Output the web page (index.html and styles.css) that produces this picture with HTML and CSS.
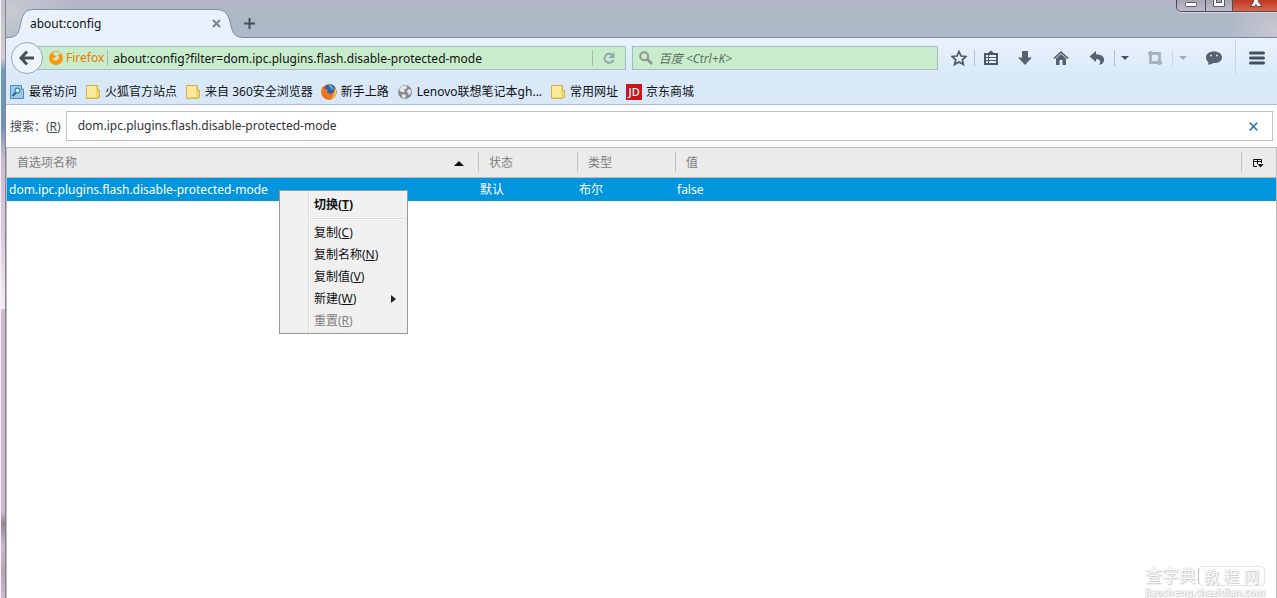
FILE: index.html
```html
<!DOCTYPE html>
<html lang="zh-CN">
<head>
<meta charset="utf-8">
<title>about:config</title>
<link rel="stylesheet" href="styles.css">
</head>
<body>
<div class="frame"></div>
<div class="window">
  <header class="titlebar">
    <div class="tab">
      <svg class="tab-shape" width="238" height="30" viewBox="0 0 238 30"><path d="M0 30V28.500H3C14 28 13 20 15 13C17 4 20 .5 28 .5H210C219 .5 222 5 224 13C226 22 227 28.500 238 28.500V30Z" fill="#e9f2fc"/><path d="M0 28.500H3C14 28 13 20 15 13C17 4 20 .5 28 .5H210C219 .5 222 5 224 13C226 22 227 28.500 238 28.500" fill="none" stroke="#8290a3"/></svg>
      <span class="tab-title">about:config</span>
      <button class="plain tab-close" aria-label="关闭标签页"><svg width="9" height="9" viewBox="0 0 9 9"><path d="M1 1L8 8M8 1L1 8" stroke="#7d8894" stroke-width="2.300"/></svg></button>
    </div>
    <button class="plain new-tab" aria-label="新建标签页"><svg width="11" height="11" viewBox="0 0 11 11"><path d="M5.500 0V11M0 5.500H11" stroke="#46505c" stroke-width="2"/></svg></button>
    <div class="controls">
      <button class="plain control" aria-label="最小化"><svg width="28" height="11"><rect x="8.500" y="2.500" width="11" height="4" rx="1" fill="#fff" stroke="#555a69"/></svg></button>
      <button class="plain control" aria-label="最大化"><svg width="26" height="11"><path d="M7.500 -2V6.500H18.500V-2" fill="#fff" stroke="#555a69"/><rect x="10.500" y="-2.500" width="5" height="5" fill="#a8a4b4" stroke="#555a69"/></svg></button>
      <button class="plain control control-close" aria-label="关闭"><svg width="44" height="11"><path d="M18 6.500H21.500L23 4.500L24.500 6.500H29L25 1L28 -3H18L21 1L17.500 6.500Z" fill="#fff" stroke="#5b4750"/></svg></button>
    </div>
  </header>

  <div class="chrome">
    <div class="nav">
      <button class="plain back" aria-label="后退"><svg width="16" height="16" viewBox="0 0 16 16"><path d="M8 1.500L2 8L8 14.500M2.500 8H15" fill="none" stroke="#46505d" stroke-width="3"/></svg></button>
      <div class="field url">
        <span class="identity"><svg width="14" height="14" viewBox="0 0 14 14"><circle cx="7" cy="7" r="7" fill="#f7990f"/><path d="M5 1.500C7 0 11 1 12 4C10 3 10 3 9 4C11 7 9 9 7 9.500C5 10 4 8 4 7L7 6.500L6 5L3.500 4.500C3 3 4 2 5 1.500Z" fill="#c8edcc"/><path d="M3 2L5 4L7 5L6 6.500L4 7C3 5 2 4 3 2Z" fill="#f7990f"/></svg>Firefox</span>
        <input class="input" aria-label="地址" value="about:config?filter=dom.ipc.plugins.flash.disable-protected-mode">
        <button class="plain reload" aria-label="刷新"><svg width="12" height="12" viewBox="0 0 12 12"><path d="M9 2.800A4.500 4.500 0 1 0 10.300 8" fill="none" stroke="#96a5a8" stroke-width="2"/><path d="M11.500 0V6H5.500Z" fill="#96a5a8"/></svg></button>
      </div>
      <div class="field search">
        <svg width="14" height="14" viewBox="0 0 14 14"><circle cx="5.200" cy="5.200" r="4" fill="none" stroke="#8d9690" stroke-width="2"/><path d="M8 8L13 13" stroke="#8d9690" stroke-width="2.600"/></svg>
        <input class="input search-input" aria-label="搜索网络" placeholder="百度 &lt;Ctrl+K&gt;">
      </div>
      <div class="tools">
        <button class="plain tool tool-star" aria-label="书签"><svg width="16" height="16" viewBox="0 0 16 16"><path d="M8 1.500L10 6L15 6.500L11.300 9.800L12.400 14.500L8 12L3.600 14.500L4.700 9.800L1 6.500L6 6Z" fill="none" stroke="#4b5865" stroke-width="1.700"/></svg></button>
        <button class="plain tool tool-list" aria-label="书签列表"><svg width="16" height="16" viewBox="0 0 16 16"><path d="M1 3H5L8 .5L11 3H15V15H1Z" fill="#4b5865"/><path d="M3 5H13V13H3Z" fill="#e5effa"/><path d="M3 7.500H13M3 10.500H13M5.500 5V13" stroke="#4b5865"/></svg></button>
        <button class="plain tool" aria-label="下载"><svg width="16" height="16" viewBox="0 0 16 16"><path d="M5 1H11V7.500H15L8 15L1 7.500H5Z" fill="#56626f"/></svg></button>
        <button class="plain tool" aria-label="主页"><svg width="16" height="16" viewBox="0 0 16 16"><path d="M1 8.500L8 2L15 8.500" fill="none" stroke="#4b5865" stroke-width="1.600"/><path d="M3 8.500L8 4L13 8.500V15H9.500V10H6.500V15H3Z" fill="#56626f"/></svg></button>
        <button class="plain tool tool-undo" aria-label="撤销关闭"><svg width="16" height="16" viewBox="0 0 16 16"><path d="M.5 6.500L7 1V4.300C13 4 16 8 15 11C14 14 12 14.500 10 14.500C12 13 12 9 7 9V12Z" fill="#56626f"/></svg></button>
        <button class="plain caret" aria-label="撤销菜单"><svg width="8" height="4"><path d="M0 0H8L4 4Z" fill="#46505c"/></svg></button>
        <button class="plain tool crop" aria-label="截图"><svg width="16" height="16" viewBox="0 0 16 16"><path d="M1 3.500H12.500V15M3.500 1V12.500H15" fill="none" stroke="#aab3bd" stroke-width="2.800"/></svg></button>
        <button class="plain caret" aria-label="截图菜单"><svg width="8" height="4"><path d="M0 0H8L4 4Z" fill="#a3adb8"/></svg></button>
        <button class="plain tool tool-chat" aria-label="聊天"><svg width="18" height="16" viewBox="0 0 18 16"><path d="M9 1.500C14 1.500 17 4 17 7.500C17 11 14 13 8.500 13C7 14 5 14.800 2.500 14.500C3.500 13.500 3.500 12.500 3.500 12C2 11 1 9.500 1 7.500C1 4 4 1.500 9 1.500Z" fill="#56626f"/><circle cx="6" cy="5.500" r="1" fill="#d5dfe9"/><circle cx="12" cy="5.500" r="1" fill="#d5dfe9"/></svg></button>
        <button class="plain tool tool-menu" aria-label="菜单"><svg width="16" height="14" viewBox="0 0 16 14"><path d="M1.500 2H14.500M1.500 7H14.500M1.500 12H14.500" stroke="#434f5c" stroke-width="3" stroke-linecap="round"/></svg></button>
      </div>
    </div>
    <nav class="bookmarks">
      <a class="bookmark" href="#"><svg width="16" height="16" viewBox="0 0 16 16"><path d="M1.500 1.500H12.500V5H14.500V14.500H1.500Z" fill="#9acbea" stroke="#4e8ebb"/><path d="M3.500 12L7 8.500" stroke="#1f5f92" stroke-width="2"/><circle cx="8.500" cy="6.500" r="2.500" fill="#d9effd" stroke="#1f5f92"/></svg>最常访问</a>
      <a class="bookmark" href="#"><svg width="16" height="16" viewBox="0 0 16 16"><path d="M1.500 1.500H12.500V6H14.500V13.500H12.500V14.500H1.500Z" fill="#f1d56c" stroke="#d3b14b"/><path d="M2 2H11V13H2Z" fill="#faea9f"/></svg>火狐官方站点</a>
      <a class="bookmark" href="#"><svg width="16" height="16" viewBox="0 0 16 16"><path d="M1.500 1.500H12.500V6H14.500V13.500H12.500V14.500H1.500Z" fill="#f1d56c" stroke="#d3b14b"/><path d="M2 2H11V13H2Z" fill="#faea9f"/></svg>来自 360安全浏览器</a>
      <a class="bookmark" href="#"><svg width="16" height="16" viewBox="0 0 16 16"><circle cx="8" cy="8" r="7.700" fill="#e8641b"/><circle cx="9" cy="6" r="5.800" fill="#2c62a8"/><path d="M7 1C10 0 13 3 12 6C11 6 9 4 7 1Z" fill="#52a6d8"/><path d="M1 3L4 4.500L7 6L6 8L9 10C12 10 14 7 13 3C17 7 16 13 11 15C6 17 0 13 .3 8Z" fill="#ec7620"/><path d="M14 4C17 9 14 14 10 15C13 12 14 9 14 4Z" fill="#f9ce45"/></svg>新手上路</a>
      <a class="bookmark" href="#"><svg width="16" height="16" viewBox="0 0 16 16"><circle cx="8" cy="8" r="7" fill="#878c93"/><path d="M5 2L9 1.500L10 4L7 6L8 8L4 8L2 5ZM11 5L14 6V9L12 11L10 8ZM5 10L9 11L8 14.500L5 13Z" fill="#e4e8ec"/></svg>Lenovo联想笔记本gh...</a>
      <a class="bookmark" href="#"><svg width="16" height="16" viewBox="0 0 16 16"><path d="M1.500 1.500H12.500V6H14.500V13.500H12.500V14.500H1.500Z" fill="#f1d56c" stroke="#d3b14b"/><path d="M2 2H11V13H2Z" fill="#faea9f"/></svg>常用网址</a>
      <a class="bookmark" href="#"><span class="jd">JD</span>京东商城</a>
    </nav>
  </div>

  <main class="content">
    <div class="filter">
      <label class="filter-label" for="filter">搜索：(<u>R</u>)</label>
      <div class="filter-box">
        <input class="input" id="filter" value="dom.ipc.plugins.flash.disable-protected-mode">
        <button class="plain clear" aria-label="清除"><svg width="9" height="9" viewBox="0 0 9 9"><path d="M.7 .7L8.300 8.300M8.300 .7L.7 8.300" stroke="#3d7db8" stroke-width="1.700"/></svg></button>
      </div>
    </div>
    <div class="tree">
      <table class="prefs">
        <colgroup><col class="col-name"><col class="col-status"><col class="col-type"><col><col class="col-picker"></colgroup>
        <thead><tr>
          <th><div class="head head-name">首选项名称<svg width="10" height="5"><path d="M5 0L10 5H0Z" fill="#111"/></svg></div></th>
          <th><div class="head">状态</div></th>
          <th><div class="head">类型</div></th>
          <th><div class="head">值</div></th>
          <th><div class="head"><button class="plain picker" aria-label="选择列"><svg width="12" height="10" viewBox="0 0 12 10"><path d="M5 8.500H1.500V1.500H9.500V5M1 3.500H10M5.500 1V6" fill="none" stroke="#111"/><path d="M5.500 6H11.500L8.500 9.500Z" fill="#111"/></svg></button></div></th>
        </tr></thead>
        <tbody><tr><td>dom.ipc.plugins.flash.disable-protected-mode</td><td>默认</td><td>布尔</td><td>false</td><td></td></tr></tbody>
      </table>
    </div>
  </main>
</div>

<div class="menu" role="menu">
  <button class="plain item item-default" role="menuitem">切换(<u>T</u>)</button>
  <hr class="rule">
  <button class="plain item" role="menuitem">复制(<u>C</u>)</button>
  <button class="plain item" role="menuitem">复制名称(<u>N</u>)</button>
  <button class="plain item" role="menuitem">复制值(<u>V</u>)</button>
  <button class="plain item" role="menuitem"><span>新建(<u>W</u>)</span><svg width="5" height="8"><path d="M0 0L5 4L0 8Z" fill="#222"/></svg></button>
  <button class="plain item" role="menuitem" disabled>重置(<u>R</u>)</button>
</div>

<div class="mark">
  <div class="mark-top"><span class="mark-name">查字典</span><span class="mark-badge"><span>教</span><span>程</span><span>网</span></span></div>
  <div class="mark-site">jiaocheng.chazidian.com</div>
</div>
</body>
</html>
```
FILE: styles.css
```css
* { box-sizing: border-box; }

body {
  margin: 0;
  min-height: 100vh;
  display: flex;
  position: relative;
  overflow: hidden;
  font: 12px/16px "Noto Sans", "Noto Sans CJK SC", sans-serif;
  color: #111;
  background: #fff;
}

svg { display: block; flex: none; }

.plain {
  display: flex;
  align-items: center;
  justify-content: center;
  margin: 0;
  padding: 0;
  border: 0;
  background: none;
  font: inherit;
  color: inherit;
}

.input {
  flex: 1;
  min-width: 0;
  padding: 0;
  border: 0;
  outline: 0;
  background: none;
  font: inherit;
  color: inherit;
}

.frame {
  width: 6px;
  flex: none;
  border-left: 1px solid #f6f4f6;
  border-right: 1px solid #85838f;
  background: linear-gradient(#c4bccb 0, #c7cbcb 30px, #d5c9d8 58px, #6b9dbd 70px, #6b93b5 125px, #9fa6c6 142px, #cdbbd6 160px, #dccbe0 240px, #f3eff3 308px, #cfbad6 310px, #cfbad6 510px, #96868f 524px, #cbb8d2 545px, #b9a5b0 570px, #cdb8d4 100%);
}

.window {
  flex: 1;
  min-width: 0;
  display: flex;
  flex-direction: column;
}

.titlebar {
  height: 38px;
  display: flex;
  align-items: flex-end;
  border-bottom: 1px solid #7c8aa0;
  background:
    radial-gradient(ellipse 50px 30px at 100% 80%, #cbc6d2, transparent),
    radial-gradient(ellipse 70px 40px at 0 30%, #c9cbd0, transparent),
    linear-gradient(#b5b2c8 0, #adb9c5 12px, #abb8c4 24px, #aeb9cb 36px);
}

.tab {
  position: relative;
  width: 238px;
  height: 29px;
  margin-bottom: -1px;
  display: flex;
  align-items: center;
  justify-content: space-between;
  padding: 0 23px 0 24px;
}

.tab-shape { position: absolute; left: 0; top: 0; }
.tab-title, .tab-close { position: relative; }
.new-tab { width: 11px; height: 28px; }

.controls {
  align-self: flex-start;
  margin-left: auto;
  display: flex;
  border: 1px solid #4d4b58;
  border-top: 0;
  border-right: 0;
  border-radius: 0 0 0 5px;
  overflow: hidden;
  box-shadow: 0 1px 0 #d9d9e2;
}

.control { height: 11px; background: linear-gradient(#a8a4b4, #bdbac8); }
.control + .control { border-left: 1px solid #4d4b58; }
.control-close { background: linear-gradient(#bc3822, #d9674c); }

.chrome {
  border-bottom: 1px solid #a7bfd8;
  background: linear-gradient(#e9f2fc, #d9e9f8 60%, #d9e8f8);
}

.nav { height: 40px; display: flex; align-items: center; }

.back {
  position: relative;
  z-index: 1;
  width: 32px;
  height: 32px;
  flex: none;
  margin-left: 5px;
  border: 1px solid #96a8bf;
  border-radius: 50%;
  background: #edf4fc;
}

.field {
  height: 24px;
  min-width: 0;
  display: flex;
  align-items: center;
  border: 1px solid #a8bac9;
  background: #c8edcc;
}

.field .input { padding-top: 2px; }

.url { flex: 589 1 0; margin-left: -5px; padding-left: 10px; }

.identity {
  display: flex;
  align-items: center;
  gap: 3px;
  margin-right: 5px;
  padding-right: 3px;
  border-right: 1px solid #a5bda9;
  color: #e67c00;
}

.reload { width: 33px; height: 16px; border-left: 1px solid #a5bda9; }
.search { flex: 305 1 0; margin: 0 5px 0 6px; padding-left: 6px; gap: 6px; }
.search-input::placeholder { color: #5f7163; font-style: italic; opacity: 1; }

.tools { flex: none; display: flex; align-items: center; }
.tool { width: 36px; height: 16px; }
.tool-star { width: 32px; border-right: 1px solid #b4bfcb; }
.tool-list { width: 32px; }
.tool-undo { border-right: 1px solid #b4bfcb; }
.caret { width: 20px; height: 16px; }
.crop { margin-left: 2px; border-right: 1px solid #cbd6e2; }
.tool-chat { width: 42px; }
.tool-menu { width: 42px; height: 36px; border-left: 1px solid #c8d5e3; }

.bookmarks {
  height: 26px;
  display: flex;
  align-items: center;
  gap: 8px;
  padding: 1px 0 0 3px;
}

.bookmark {
  display: flex;
  align-items: center;
  gap: 4px;
  color: inherit;
  text-decoration: none;
  white-space: nowrap;
}

.jd {
  width: 16px;
  background: #c9151e;
  color: #fff;
  font-size: 11px;
  font-weight: 500;
  text-align: center;
}

.content { flex: 1; display: flex; flex-direction: column; background: #fbfbfb; }

.filter {
  display: flex;
  align-items: center;
  gap: 5px;
  padding: 6px 4px;
  color: #454d55;
}

.filter-label { padding-top: 2px; font-family: "Noto Sans", "Noto Sans CJK TC", sans-serif; }

.filter-box {
  flex: 1;
  height: 30px;
  display: flex;
  align-items: center;
  padding: 0 14px 0 11px;
  border: 1px solid #c1c1c1;
  background: #fff;
  color: #333;
}

.tree { flex: 1; border: 1px solid #bcbcbc; border-bottom: 0; background: #fff; }

.prefs { width: 100%; table-layout: fixed; border-collapse: collapse; }
.col-name { width: 471px; }
.col-status { width: 99px; }
.col-type { width: 98px; }
.col-picker { width: 35px; }

.prefs th {
  height: 29px;
  padding: 0;
  border-bottom: 1px solid #bcbcbc;
  background: #ebebeb;
  color: #808080;
  font-weight: 400;
  text-align: left;
}

.head {
  height: 20px;
  display: flex;
  align-items: center;
  padding: 2px 0 0 10px;
  border-left: 1px solid #c1c1c1;
}

.head-name { justify-content: space-between; padding: 2px 14px 0 9px; border-color: transparent; }

.prefs td {
  height: 24px;
  padding: 2px 2px 0;
  background: #0095dd;
  color: #fff;
  white-space: nowrap;
}

.menu {
  position: absolute;
  left: 279px;
  top: 190px;
  width: 129px;
  padding: 3px 2px 1px;
  border: 1px solid #979797;
  background: linear-gradient(90deg, #f0f0f0 28px, #dedede 28px, #dedede 29px, #fff 29px, #fff 30px, #f0f0f0 30px);
}

.item {
  width: 100%;
  height: 22px;
  justify-content: flex-start;
  padding: 0 9px 0 32px;
}

.item svg { margin-left: auto; }
.item-default { font-weight: 700; }
.item:disabled { color: #808080; }

.rule {
  height: 2px;
  margin: 2px 0 2px 28px;
  border: 0;
  border-top: 1px solid #dedede;
  background: #fff;
}

.mark {
  position: absolute;
  right: 12px;
  bottom: 0;
  color: #fff;
  text-shadow: 0 0 1px #aaa, 1px 1px 1px #ccc;
}

.mark-top { display: flex; align-items: center; justify-content: space-between; }
.mark-name { font-size: 17px; line-height: 20px; }
.mark-badge {
  display: flex;
  gap: 5px;
  padding: 0 5px;
  border: 1px solid #e4e4e4;
  border-left-color: #bbb;
  border-radius: 5px;
  font-size: 15px;
  line-height: 18px;
}
.mark-site { font-size: 10px; line-height: 12px; font-weight: 600; }
```
